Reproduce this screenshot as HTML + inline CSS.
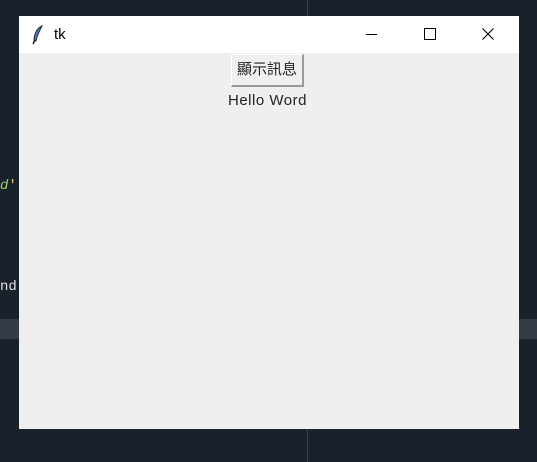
<!DOCTYPE html>
<html><head><meta charset="utf-8"><style>
body{margin:0;width:537px;height:462px;background:#19212b;position:relative;overflow:hidden;font-family:"Liberation Sans","Noto Sans CJK TC",sans-serif}
.a{position:absolute}
</style></head><body>
<div class="a" style="left:307px;top:0;width:1px;height:462px;background:#3a424c"></div>
<div class="a" style="left:0;top:319px;width:537px;height:20px;background:#343b44"></div>
<div class="a" style="left:0;top:178px;font:14px 'Liberation Mono',monospace;color:#9ed36a;font-style:italic">d<span style="color:#e6c07b;font-style:normal">')</span></div>
<div class="a" style="left:0;top:279px;font:14px 'Liberation Mono',monospace;color:#e0e0e0">nd</div>
<div class="a" style="left:19px;top:16px;width:500px;height:413px;background:#efefef">
 <div class="a" style="left:0;top:0;width:500px;height:37px;background:#fff"></div>
 <svg class="a" style="left:12px;top:9px" width="14" height="20" viewBox="0 0 14 20"><path d="M11 1 C6 3 3 9 3 16 L5 16 C6 10 9 5 11 1Z" fill="#4a7fd0" stroke="#223" stroke-width="1"/><path d="M4 15 L2 19" stroke="#222" stroke-width="1.5"/></svg>
 <div class="a" style="left:35px;top:10px;font-size:15px;color:#000">tk</div>
 <div class="a" style="left:347px;top:18px;width:11px;height:1px;background:#000"></div>
 <div class="a" style="left:405px;top:12px;width:10px;height:10px;border:1px solid #000"></div>
 <svg class="a" style="left:463px;top:12px" width="12" height="12"><path d="M0.5 0.5L11.5 11.5M11.5 0.5L0.5 11.5" stroke="#000" stroke-width="1.1"/></svg>
 <div class="a" style="left:212px;top:38px;width:73px;height:33px;background:#f0f0f0;border-left:1px solid #fff;border-top:1px solid #fff;border-right:2px solid #9a9a9a;border-bottom:2px solid #9a9a9a;box-sizing:border-box;font-size:15px;color:#222;text-align:center;line-height:30px">顯示訊息</div>
 <div class="a" style="left:209px;top:76px;font-size:15px;letter-spacing:0.5px;color:#222">Hello Word</div>
</div>
</body></html>
